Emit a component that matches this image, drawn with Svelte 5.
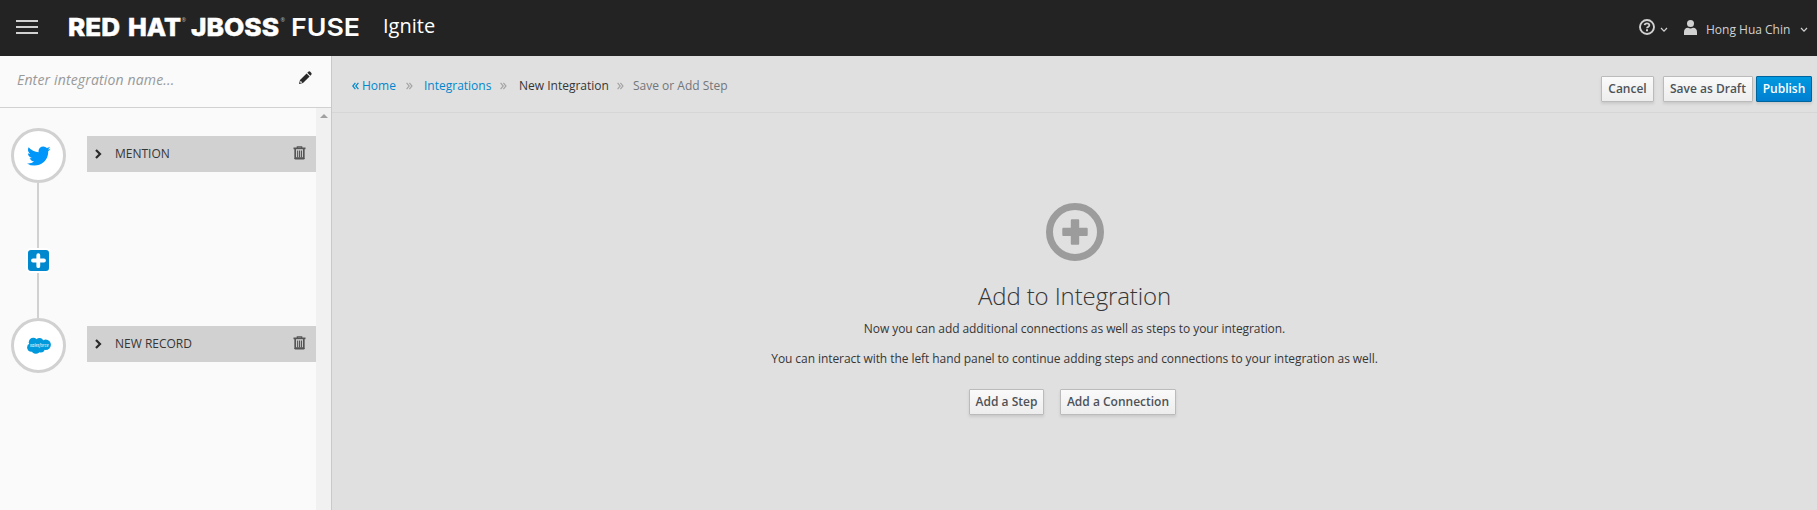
<script>
  const steps = [
    { name: 'MENTION', kind: 'twitter' },
    { name: 'NEW RECORD', kind: 'salesforce' }
  ];
</script>

{#snippet chevronDown()}
  <svg class="caret" width="8" height="6" viewBox="0 0 8 6"><path d="M1 1l3 3.200L7 1" fill="none" stroke="currentColor" stroke-width="1.200" /></svg>
{/snippet}

{#snippet doubleArrow(cls, flip)}
  <svg class={cls} width="7" height="8" viewBox="0 0 7 8"><path d={flip ? 'M3.400 .8L.8 4l2.600 3.200M6.400 .8L3.800 4l2.600 3.200' : 'M.6 .8L3.200 4 .6 7.200M3.400 .8L6 4 3.400 7.200'} fill="none" stroke="currentColor" stroke-width="1.200" /></svg>
{/snippet}

<div class="app">
  <header>
    <button class="menu" aria-label="Menu"><i></i><i></i><i></i></button>
    <svg class="brand" width="300" height="34" viewBox="-4 -5 300 34" fill="#fff" stroke="#fff">
      <g font-family="Inter" font-size="24.600" font-weight="800" stroke-width=".5">
        <text x="-1" y="20.700" textLength="52" lengthAdjust="spacingAndGlyphs">RED</text>
        <text x="59" y="20.700" textLength="53" lengthAdjust="spacingAndGlyphs">HAT</text>
        <text x="122" y="20.700" textLength="88" lengthAdjust="spacingAndGlyphs">JBOSS</text>
      </g>
      <text x="222" y="20.700" font-family="Inter" font-size="24.600" font-weight="600" stroke="none" textLength="69" lengthAdjust="spacingAndGlyphs">FUSE</text>
      <g font-family="Open Sans" font-size="5.500" fill="#bbb" stroke="none"><text x="112.500" y="7">®</text><text x="211.500" y="7">®</text></g>
    </svg>
    <span class="product">Ignite</span>
    <div class="utilities">
      <svg class="help" width="16" height="16" viewBox="0 0 16 16"><circle cx="8" cy="8" r="7" fill="none" stroke="currentColor" stroke-width="1.900" /><path d="M5.600 6.200Q5.800 4.300 8 4.300T10.400 6.100Q10.400 7.300 9.200 7.800 8 8.300 8 9.300" fill="none" stroke="currentColor" stroke-width="1.800" /><path d="M7 10.300h2v2H7z" fill="currentColor" /></svg>
      {@render chevronDown()}
      <svg class="user" width="13" height="15" viewBox="0 0 13 15" fill="currentColor"><circle cx="6.500" cy="3.600" r="3.500" /><path d="M0 15v-3q0-4 4-4.200 2.500 1.200 5 0 4 .2 4 4.200v3z" /></svg>
      <span class="username">Hong Hua Chin</span>
      {@render chevronDown()}
    </div>
  </header>

  <div class="body">
    <aside>
      <div class="name">
        <span>Enter integration name...</span>
        <svg width="13" height="13" viewBox="0 0 13 13" fill="#292929"><path d="M9.300 .7Q10.100 0 11 .6L12.400 2Q13 2.900 12.300 3.700L11.300 4.700 8.300 1.700zM7.600 2.400l3 3L4 12 .2 12.900Q0 12.900 .1 12.500L1 9z" /><path d="M1.600 9.800l1.700 1.700-1.600.4-.6-.6z" fill="#fafafa" /></svg>
      </div>
      <div class="panel">
        <div class="flow">
          {#each steps as step, i}
            {#if i > 0}
              <div class="link">
                <button class="plus" aria-label="Add">
                  <svg width="21" height="21" viewBox="0 0 21 21"><path d="M10.300 5.200v11M5 10.500h11" stroke="#fff" stroke-width="3.800" stroke-linecap="round" /></svg>
                </button>
              </div>
            {/if}
            <div class="step">
              <div class="circle">
                {#if step.kind === 'twitter'}
                  <svg width="24" height="20" viewBox="108 246 1600 1300" fill="#0096fa"><path d="M1684 408q-67 98-162 167 1 14 1 42 0 130-38 259.500t-115.500 248.500-184.500 210.500-258 146-323 54.500q-271 0-496-145 35 4 78 4 225 0 401-138-105-2-188-64.500t-114-159.500q33 5 61 5 43 0 85-11-112-23-185.500-111.500t-73.500-205.500v-4q68 38 146 41-66-44-105-115t-39-154q0-88 44-163 121 149 294.500 238.500t371.500 99.500q-8-38-8-74 0-134 94.500-228.500t228.500-94.500q140 0 236 102 109-21 205-78-37 115-142 178 93-10 186-50z" /></svg>
                {:else}
                  <svg width="24" height="17" viewBox="0 0 24 17"><g fill="#0099dc"><circle cx="6.300" cy="5.200" r="4.500" /><circle cx="12.500" cy="4.600" r="3.700" /><circle cx="4.300" cy="10.500" r="4.200" /><circle cx="8.800" cy="12.200" r="4.500" /><circle cx="13.700" cy="11.500" r="4" /><circle cx="18.700" cy="7.700" r="5.200" /><path d="M6 5h12v6H6z" /></g><text x="3" y="9.800" font-family="Open Sans" font-size="4.600" font-style="italic" fill="#fff" textLength="18.500" lengthAdjust="spacingAndGlyphs">salesforce</text></svg>
                {/if}
              </div>
              <div class="card">
                <svg width="7" height="10" viewBox="0 0 7 10"><path d="M1 1l4 4-4 4" fill="none" stroke="#292929" stroke-width="2.200" /></svg>
                <span>{step.name}</span>
                <svg class="trash" width="13" height="14" viewBox="0 0 12 14"><path d="M3.800 2V.8h4.400V2" fill="none" stroke="#555" stroke-width="1.200" /><path d="M0 1.500h12v1.700H0z" fill="#555" /><path d="M1.700 3v9.200h8.600V3" fill="none" stroke="#555" stroke-width="1.700" /><path d="M1 12h10v.8q0 .7-.7.7H1.700Q1 13.500 1 12.800zM3.600 4.500h1.100v7H3.600zM5.500 4.500h1.100v7H5.500zM7.400 4.500h1.100v7H7.400z" fill="#555" /></svg>
              </div>
            </div>
          {/each}
        </div>
        <div class="scrollbar"><i></i></div>
      </div>
    </aside>

    <main>
      <div class="toolbar">
        <nav>
          <a class="home">{@render doubleArrow('back', true)}Home</a>
          {@render doubleArrow('sep', false)}
          <a class="integrations">Integrations</a>
          {@render doubleArrow('sep', false)}
          <span class="current">New Integration</span>
          {@render doubleArrow('sep', false)}
          <span class="last">Save or Add Step</span>
        </nav>
        <div class="actions">
          <button class="btn cancel">Cancel</button>
          <button class="btn draft">Save as Draft</button>
          <button class="btn primary">Publish</button>
        </div>
      </div>
      <section>
        <svg width="58" height="58" viewBox="0 0 58 58"><circle cx="29" cy="29" r="25.500" fill="none" stroke="#9c9c9c" stroke-width="7" /><path d="M25.800 16.300h6.400q1 0 1 1v7.400h7.500q1 0 1 1v6.400q0 1-1 1h-7.500v7.600q0 1-1 1h-6.400q-1 0-1-1v-7.600h-7.500q-1 0-1-1v-6.400q0-1 1-1h7.500v-7.400q0-1 1-1z" fill="#9c9c9c" /></svg>
        <h1>Add to Integration</h1>
        <p>Now you can add additional connections as well as steps to your integration.</p>
        <p>You can interact with the left hand panel to continue adding steps and connections to your integration as well.</p>
        <div class="choices">
          <button class="btn step-btn">Add a Step</button>
          <button class="btn connection-btn">Add a Connection</button>
        </div>
      </section>
    </main>
  </div>
</div>

<style>
  :global(body) { margin: 0; overflow: hidden; }
  .app { height: 510px; display: flex; flex-direction: column; font: 12px/20px "Open Sans", sans-serif; color: #363636; background: #e0e0e0; }
  * { box-sizing: border-box; }
  svg { display: block; flex: none; }
  span, a, p, h1, .btn { white-space: nowrap; }
  button { font: inherit; padding: 0; border: 0; }
  header { height: 56px; flex: none; background: #232323; display: flex; align-items: flex-start; color: #d1d1d1; }
  .menu { margin: 20px 0 0 16px; width: 22px; background: none; display: flex; flex-direction: column; gap: 4px; }
  .menu i { height: 2px; width: 22px; background: #d1d1d1; }
  .brand { margin: 10px 0 0 27px; }
  .product { font-size: 20px; line-height: 24px; color: #fff; margin: 14px 0 0 18px; }
  .utilities { margin-left: auto; margin-right: 9px; display: flex; align-items: center; padding-top: 19px; height: 36px; }
  .help { margin-top: -1px; }
  .utilities .caret { margin: 5px 0 0 5px; }
  .utilities .user { margin: 0 9px 0 16px; }
  .username { width: 94px; padding-top: 4px; }
  .utilities .username + .caret { margin-left: 0; }
  .body { flex: 1; min-height: 0; display: flex; }
  aside { width: 332px; flex: none; border-right: 1px solid #c9c9c9; background: #fafafa; display: flex; flex-direction: column; }
  .name { height: 52px; flex: none; border-bottom: 1px solid #d1d1d1; display: flex; justify-content: space-between; align-items: flex-start; padding: 14px 19px 0 17px; }
  .name span { font-size: 14px; font-style: italic; color: #999; letter-spacing: .16px; }
  .name svg { margin-top: 1px; }
  .panel { flex: 1; display: flex; }
  .flow { flex: 1; padding: 20px 0 0 11px; }
  .step { display: flex; align-items: flex-start; gap: 21px; }
  .circle { width: 55px; height: 55px; flex: none; border: 3px solid #d1d1d1; border-radius: 50%; background: #fff; display: flex; align-items: center; justify-content: center; }
  .card { flex: 1; height: 36px; margin-top: 8px; background: #d1d1d1; display: flex; align-items: center; padding: 0 10px 0 8px; }
  .card span { margin-left: 13px; }
  .trash { margin: -2px 0 0 auto; }
  .link { width: 55px; height: 135px; display: flex; justify-content: center; padding-top: 65px; background: linear-gradient(#d1d1d1, #d1d1d1) 26px 0 / 2px 100% no-repeat; }
  .plus { width: 25px; height: 25px; border: 2px solid #fff; border-radius: 5px; background: #0088ce; }
  .scrollbar { width: 15px; background: #f1f1f1; display: flex; justify-content: center; padding-top: 6px; }
  .scrollbar i { width: 0; height: 0; border: 4px solid transparent; border-top: 0; border-bottom-color: #a0a0a0; }
  main { flex: 1; min-width: 0; }
  .toolbar { height: 57px; border-bottom: 1px solid #d6d6d6; display: flex; justify-content: space-between; align-items: flex-start; padding: 20px 5px 0 20px; }
  nav { display: flex; align-items: center; }
  nav a { color: #0088ce; display: flex; align-items: center; }
  .back { margin-right: 3px; }
  .sep { color: #a5a5a5; }
  .home { width: 54px; }
  .integrations { width: 67px; margin-left: 11px; }
  .integrations + .sep { margin-left: 9px; }
  .current { width: 89px; margin-left: 12px; }
  .current + .sep { margin-left: 9px; }
  .last { color: #72767b; margin-left: 9px; }
  .actions { display: flex; }
  .btn { height: 26px; border: 1px solid #bbb; border-radius: 1px; background: linear-gradient(#fafafa, #ededed); box-shadow: 0 2px 3px rgba(3, 3, 3, .1); font-weight: 600; color: #4d5258; line-height: 24px; text-align: center; }
  .cancel { width: 53px; }
  .draft { width: 90px; margin-left: 9px; }
  .primary { width: 56px; margin-left: 3px; color: #fff; border-color: #00659c; background: linear-gradient(#0099e0, #007fd0); }
  section { display: flex; flex-direction: column; align-items: center; padding-top: 90px; }
  h1 { margin: 22px 0 10px; font-size: 24px; line-height: 26px; font-weight: 300; letter-spacing: -.12px; }
  p { margin: 0 0 10px; line-height: 20px; letter-spacing: -.07px; }
  .choices { display: flex; gap: 16px; margin: 10px 4px 0 0; }
  .step-btn { width: 75px; }
  .connection-btn { width: 116px; }
</style>
